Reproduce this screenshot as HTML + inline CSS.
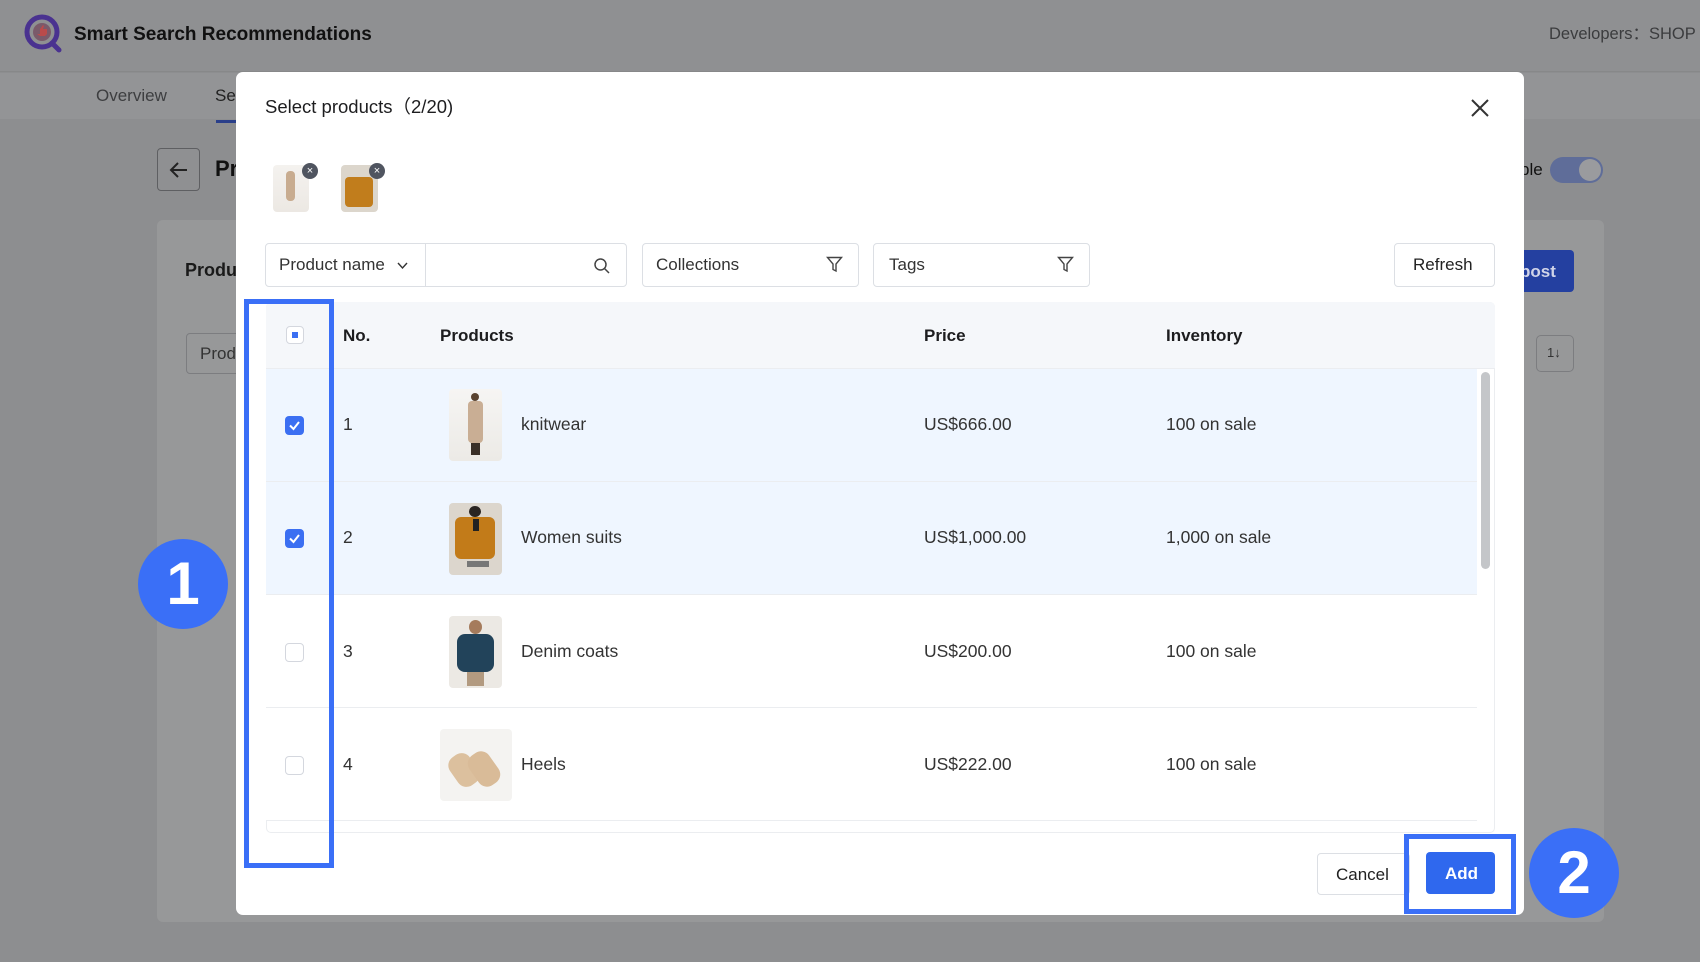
<!DOCTYPE html>
<html><head><meta charset="utf-8">
<style>
*{box-sizing:border-box;margin:0;padding:0}
body{width:1700px;height:962px;overflow:hidden;background:#8d8e90;font-family:"Liberation Sans",Arial,sans-serif;position:relative;color:#222}
.a{position:absolute}
.t{position:absolute;white-space:nowrap;line-height:1}
.cb{position:absolute;width:19px;height:19px;border-radius:4px}
.cb.on{background:#3b6ff2}
.cb.off{background:#fff;border:1.5px solid #d4d7de}
.img{position:absolute;border-radius:4px;overflow:hidden}
.row{position:absolute;left:266px;width:1211px;border-bottom:1px solid #ebedf0}
.cell{font-size:17.5px;color:#333}
</style></head><body>
<div class="a" style="left:0;top:0;width:1700px;height:72px;background:#8f9092;border-bottom:1px solid #878889"></div>
<svg class="a" style="left:23px;top:14px" width="42" height="40" viewBox="0 0 42 40"><circle cx="19" cy="18" r="15" fill="none" stroke="#4a3290" stroke-width="5"/><line x1="29" y1="29" x2="36" y2="36" stroke="#4a3290" stroke-width="5" stroke-linecap="round"/><circle cx="19" cy="18" r="9" fill="#7a5a6a"/><path d="M14 20h3v-5l3-4 1 1-1 3h4v5l-2 2h-5z" fill="#b94b4b"/></svg>
<div class="t" style="left:74px;top:25px;font-size:19px;font-weight:bold;color:#111">Smart Search Recommendations</div>
<div class="t" style="left:1549px;top:26px;font-size:16.5px;color:#3b3c3e">Developers：SHOP</div>
<div class="a" style="left:0;top:73px;width:1700px;height:46px;background:#939496"></div>
<div class="t" style="left:96px;top:87px;font-size:17px;color:#3d3e40">Overview</div>
<div class="t" style="left:215px;top:87px;font-size:17px;color:#222">Se</div>
<div class="a" style="left:216px;top:120px;width:22px;height:3px;background:#2a3f8a"></div>
<div class="a" style="left:157px;top:148px;width:43px;height:43px;border:1px solid #5e5f62;border-radius:4px;background:#8f9092"></div>
<svg class="a" style="left:168px;top:159px" width="22" height="22" viewBox="0 0 22 22"><path d="M19 11H4M10 4l-7 7 7 7" fill="none" stroke="#222" stroke-width="2"/></svg>
<div class="t" style="left:215px;top:158px;font-size:22px;font-weight:bold;color:#111">Pr</div>
<div class="a" style="left:157px;top:220px;width:1447px;height:702px;background:#979899;border-radius:6px"></div>
<div class="t" style="left:185px;top:261px;font-size:18px;font-weight:bold;color:#1a1a1a">Produ</div>
<div class="a" style="left:186px;top:333px;width:60px;height:41px;border:1px solid #7c7d80;border-radius:4px"></div>
<div class="t" style="left:200px;top:345px;font-size:17px;color:#333">Prod</div>
<div class="t" style="left:1520px;top:161px;font-size:17px;color:#111">ble</div>
<div class="a" style="left:1550px;top:157px;width:53px;height:26px;border-radius:13px;background:#5f6d99"></div>
<div class="a" style="left:1579px;top:159px;width:22px;height:22px;border-radius:50%;background:#9a9b9e"></div>
<div class="a" style="left:1500px;top:250px;width:74px;height:42px;border-radius:4px;background:#2440a0"></div>
<div class="t" style="left:1520px;top:263px;font-size:17px;font-weight:bold;color:#d0d4e8">post</div>
<div class="a" style="left:1536px;top:335px;width:38px;height:37px;border:1px solid #7c7d80;border-radius:5px"></div>
<div class="t" style="left:1547px;top:346px;font-size:13px;color:#333">1↓</div>

<div class="a" style="left:236px;top:72px;width:1288px;height:843px;background:#fff;border-radius:7px"></div>
<div class="t" style="left:265px;top:98px;font-size:18.5px;color:#1d1d1f">Select products（2/20)</div>
<svg class="a" style="left:1470px;top:98px" width="20" height="20" viewBox="0 0 20 20"><path d="M2 2L18 18M18 2L2 18" stroke="#333" stroke-width="2"/></svg>
<div class="img" style="left:273px;top:165px;width:36px;height:47px;background:linear-gradient(#f4f2ef,#ece8e3)"><div class="a" style="left:13px;top:6px;width:9px;height:30px;background:#c8ac90;border-radius:4px"></div></div>
<div class="img" style="left:341px;top:165px;width:37px;height:47px;background:#dcd6cc"><div class="a" style="left:4px;top:12px;width:28px;height:30px;background:#c17d1c;border-radius:4px"></div></div>
<div class="a" style="left:302px;top:163px;width:16px;height:16px;border-radius:50%;background:#505560;color:#fff;font-size:11px;text-align:center;line-height:16px">×</div>
<div class="a" style="left:369px;top:163px;width:16px;height:16px;border-radius:50%;background:#505560;color:#fff;font-size:11px;text-align:center;line-height:16px">×</div>
<div class="a" style="left:265px;top:243px;width:362px;height:44px;border:1px solid #dcdfe4;border-radius:4px"></div>
<div class="a" style="left:425px;top:243px;width:1px;height:44px;background:#dcdfe4"></div>
<div class="t" style="left:279px;top:256px;font-size:17px;color:#333">Product name</div>
<svg class="a" style="left:397px;top:262px" width="11" height="8" viewBox="0 0 11 8"><path d="M1 1l4.5 5L10 1" fill="none" stroke="#333" stroke-width="1.4"/></svg>
<svg class="a" style="left:593px;top:257px" width="18" height="18" viewBox="0 0 18 18"><circle cx="7.5" cy="7.5" r="5.5" fill="none" stroke="#444" stroke-width="1.5"/><path d="M11.5 11.5l4.5 4.5" stroke="#444" stroke-width="1.5"/></svg>
<div class="a" style="left:642px;top:243px;width:217px;height:44px;border:1px solid #dcdfe4;border-radius:4px"></div>
<div class="t" style="left:656px;top:256px;font-size:17px;color:#333">Collections</div>
<svg class="a" style="left:826px;top:256px" width="17" height="17" viewBox="0 0 17 17"><path d="M1.5 1.5h14l-5.5 6.5v7l-3-1.5v-5.5z" fill="none" stroke="#444" stroke-width="1.4"/></svg>
<div class="a" style="left:873px;top:243px;width:217px;height:44px;border:1px solid #dcdfe4;border-radius:4px"></div>
<div class="t" style="left:889px;top:256px;font-size:17px;color:#333">Tags</div>
<svg class="a" style="left:1057px;top:256px" width="17" height="17" viewBox="0 0 17 17"><path d="M1.5 1.5h14l-5.5 6.5v7l-3-1.5v-5.5z" fill="none" stroke="#444" stroke-width="1.4"/></svg>
<div class="a" style="left:1394px;top:243px;width:101px;height:44px;border:1px solid #dcdfe4;border-radius:4px"></div>
<div class="t" style="left:1413px;top:256px;font-size:17px;color:#222">Refresh</div>
<div class="a" style="left:266px;top:302px;width:1229px;height:531px;border:1px solid #ebedf0;border-radius:5px"></div>
<div class="a" style="left:266px;top:302px;width:1229px;height:67px;background:#f5f7fa;border-bottom:1px solid #ebedf0;border-radius:5px 5px 0 0"></div>
<div class="a" style="left:286px;top:326px;width:18px;height:18px;border:1.5px solid #d4d7de;border-radius:4px;background:#fff"></div>
<div class="a" style="left:292px;top:332px;width:6px;height:6px;background:#3b6ff2"></div>
<div class="t" style="left:343px;top:327px;font-size:17px;font-weight:bold;color:#1d1d1f">No.</div>
<div class="t" style="left:440px;top:327px;font-size:17px;font-weight:bold;color:#1d1d1f">Products</div>
<div class="t" style="left:924px;top:327px;font-size:17px;font-weight:bold;color:#1d1d1f">Price</div>
<div class="t" style="left:1166px;top:327px;font-size:17px;font-weight:bold;color:#1d1d1f">Inventory</div>

<div class="row" style="top:369px;height:113px;background:#eff6ff"></div>
<div class="row" style="top:482px;height:113px;background:#eff6ff"></div>
<div class="row" style="top:595px;height:113px;background:#fff"></div>
<div class="row" style="top:708px;height:113px;background:#fff"></div>
<div class="a" style="left:1481px;top:372px;width:9px;height:197px;border-radius:5px;background:#c4c6c9"></div>

<div class="cb on" style="left:285px;top:416px"></div><svg class="a" style="left:288px;top:420px" width="13" height="11" viewBox="0 0 13 11"><path d="M2 5.5l3.5 3.5L11 2" fill="none" stroke="#fff" stroke-width="2"/></svg>
<div class="cb on" style="left:285px;top:529px"></div><svg class="a" style="left:288px;top:533px" width="13" height="11" viewBox="0 0 13 11"><path d="M2 5.5l3.5 3.5L11 2" fill="none" stroke="#fff" stroke-width="2"/></svg>
<div class="cb off" style="left:285px;top:643px"></div>
<div class="cb off" style="left:285px;top:756px"></div>

<div class="t cell" style="left:343px;top:416px">1</div>
<div class="t cell" style="left:343px;top:529px">2</div>
<div class="t cell" style="left:343px;top:643px">3</div>
<div class="t cell" style="left:343px;top:756px">4</div>

<div class="img" style="left:449px;top:389px;width:53px;height:72px;background:linear-gradient(#f6f5f3,#eceae6)"><div class="a" style="left:22px;top:4px;width:8px;height:8px;border-radius:50%;background:#5a4330"></div><div class="a" style="left:19px;top:12px;width:15px;height:42px;border-radius:4px;background:#c9ae94"></div><div class="a" style="left:22px;top:54px;width:9px;height:12px;background:#3a3028"></div></div>
<div class="img" style="left:449px;top:503px;width:53px;height:72px;background:#dcd6cd"><div class="a" style="left:20px;top:3px;width:12px;height:11px;border-radius:50%;background:#2a2522"></div><div class="a" style="left:6px;top:14px;width:40px;height:42px;border-radius:6px;background:#c27b19"></div><div class="a" style="left:24px;top:16px;width:6px;height:12px;background:#222"></div><div class="a" style="left:18px;top:58px;width:22px;height:6px;background:#777"></div></div>
<div class="img" style="left:449px;top:616px;width:53px;height:72px;background:#ece9e4"><div class="a" style="left:20px;top:4px;width:13px;height:14px;border-radius:50%;background:#a57b5c"></div><div class="a" style="left:8px;top:18px;width:37px;height:38px;border-radius:8px;background:#22435a"></div><div class="a" style="left:18px;top:56px;width:17px;height:14px;background:#b29a80"></div></div>
<div class="img" style="left:440px;top:729px;width:72px;height:72px;background:#f4f3f1"><div class="a" style="left:12px;top:24px;width:24px;height:34px;border-radius:10px;background:#dcc09e;transform:rotate(-35deg)"></div><div class="a" style="left:32px;top:22px;width:24px;height:36px;border-radius:10px;background:#d9bb98;transform:rotate(-35deg)"></div></div>

<div class="t cell" style="left:521px;top:416px">knitwear</div>
<div class="t cell" style="left:521px;top:529px">Women suits</div>
<div class="t cell" style="left:521px;top:643px">Denim coats</div>
<div class="t cell" style="left:521px;top:756px">Heels</div>
<div class="t cell" style="left:924px;top:416px">US$666.00</div>
<div class="t cell" style="left:924px;top:529px">US$1,000.00</div>
<div class="t cell" style="left:924px;top:643px">US$200.00</div>
<div class="t cell" style="left:924px;top:756px">US$222.00</div>
<div class="t cell" style="left:1166px;top:416px">100 on sale</div>
<div class="t cell" style="left:1166px;top:529px">1,000 on sale</div>
<div class="t cell" style="left:1166px;top:643px">100 on sale</div>
<div class="t cell" style="left:1166px;top:756px">100 on sale</div>

<div class="a" style="left:1317px;top:853px;width:93px;height:42px;border:1px solid #dcdfe4;border-radius:4px"></div>
<div class="t" style="left:1336px;top:866px;font-size:17px;color:#222">Cancel</div>
<div class="a" style="left:1426px;top:852px;width:69px;height:42px;background:#2f68ee;border-radius:4px"></div>
<div class="t" style="left:1445px;top:865px;font-size:17px;font-weight:bold;color:#fff">Add</div>

<div class="a" style="left:244px;top:299px;width:90px;height:569px;border:5px solid #3a6ff7"></div>
<div class="a" style="left:1404px;top:834px;width:112px;height:80px;border:5px solid #3a6ff7"></div>
<div class="a" style="left:138px;top:539px;width:90px;height:90px;border-radius:50%;background:#3a6ff7;color:#fff;font-size:60px;font-weight:bold;text-align:center;line-height:90px">1</div>
<div class="a" style="left:1529px;top:828px;width:90px;height:90px;border-radius:50%;background:#3a6ff7;color:#fff;font-size:60px;font-weight:bold;text-align:center;line-height:90px">2</div>
</body></html>
